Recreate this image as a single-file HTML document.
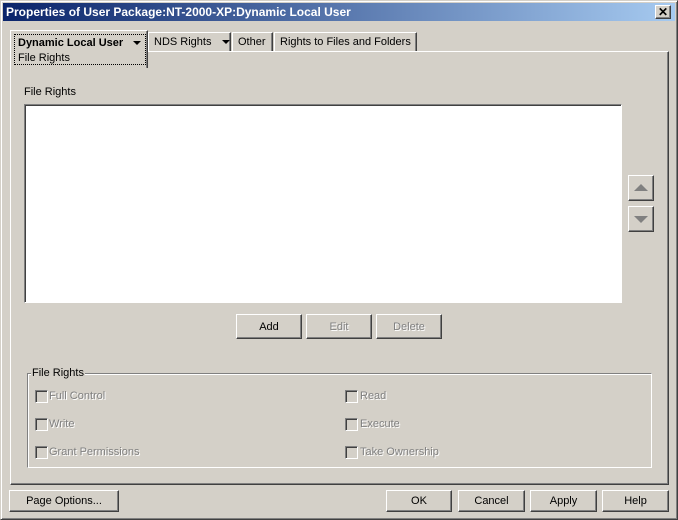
<!DOCTYPE html>
<html><head><style>
*{box-sizing:border-box;margin:0;padding:0}
body{width:678px;height:520px;background:#d4d0c8;font-family:"Liberation Sans",sans-serif;font-size:11px;position:relative;overflow:hidden;color:#000}
.a{position:absolute}
.win{left:0;top:0;width:678px;height:520px;border:1px solid;border-color:#d4d0c8 #404040 #404040 #d4d0c8;box-shadow:inset 1px 1px 0 #fff,inset -1px -1px 0 #808080}
.title{left:3px;top:3px;width:672px;height:18px;background:linear-gradient(90deg,#0a246a,#a6caf0);color:#fff;font-weight:bold;font-size:12px;line-height:18px;padding-left:3px}
.btn{border:1px solid;border-color:#fff #404040 #404040 #fff;box-shadow:inset -1px -1px 0 #808080;text-align:center;line-height:22px;background:#d4d0c8}
.dis{color:#808080;text-shadow:1px 1px 0 #fff}
.tab{border:1px solid;border-bottom:none;border-color:#fff #404040 #404040 #fff;box-shadow:inset -1px 0 0 #808080;line-height:16px;padding-left:5px;background:#d4d0c8}
.cb{width:13px;height:13px;border:1px solid;border-color:#808080 #fff #fff #808080;box-shadow:inset 1px 1px 0 #404040}
.dn{display:inline-block;width:0;height:0;border-left:4px solid transparent;border-right:4px solid transparent;border-top:4px solid #000;vertical-align:middle}
</style></head><body>
<div class="a win"></div>
<div class="a title">Properties of User Package:NT-2000-XP:Dynamic Local User</div>
<div class="a btn" style="left:655px;top:5px;width:16px;height:14px;line-height:12px;font-weight:bold;font-size:12px">✕</div>
<div class="a" style="left:10px;top:51px;width:659px;height:434px;border:1px solid;border-color:#fff #404040 #404040 #fff;box-shadow:inset -1px -1px 0 #808080"></div>
<div class="a tab" style="left:148px;top:32px;width:83px;height:19px;padding-top:1px">NDS Rights <span class="dn" style="margin-left:7px"></span></div>
<div class="a tab" style="left:232px;top:32px;width:41px;height:19px;padding-top:1px">Other</div>
<div class="a tab" style="left:274px;top:32px;width:143px;height:19px;padding-top:1px">Rights to Files and Folders</div>
<div class="a tab" style="left:10px;top:30px;width:138px;height:38px;background:#d4d0c8"></div>
<div class="a" style="left:14px;top:34px;width:132px;height:31px;border:1px dotted #000;padding-left:3px;padding-top:1px;line-height:15px"><b>Dynamic Local User</b> <span class="dn" style="margin-left:7px"></span><br>File Rights</div>
<div class="a" style="left:24px;top:86px">File Rights</div>
<div class="a" style="left:24px;top:104px;width:598px;height:199px;background:#fff;border:1px solid;border-color:#808080 #fff #fff #808080;box-shadow:inset 1px 1px 0 #404040"></div>
<div class="a btn" style="left:628px;top:175px;width:26px;height:26px"><div class="a" style="left:5px;top:8px;width:0;height:0;border-left:7px solid transparent;border-right:7px solid transparent;border-bottom:7px solid #808080"></div></div>
<div class="a btn" style="left:628px;top:206px;width:26px;height:26px"><div class="a" style="left:5px;top:9px;width:0;height:0;border-left:7px solid transparent;border-right:7px solid transparent;border-top:7px solid #808080"></div></div>
<div class="a btn" style="left:236px;top:314px;width:66px;height:25px;line-height:24px">Add</div>
<div class="a btn dis" style="left:306px;top:314px;width:66px;height:25px;line-height:24px">Edit</div>
<div class="a btn dis" style="left:376px;top:314px;width:66px;height:25px;line-height:24px">Delete</div>
<div class="a" style="left:27px;top:373px;width:625px;height:95px;border:1px solid;border-color:#808080 #fff #fff #808080;box-shadow:inset 1px 1px 0 #fff,1px 1px 0 #808080 inset"></div>
<div class="a" style="left:31px;top:367px;background:#d4d0c8;padding:0 1px">File Rights</div>
<div class="a cb" style="left:35px;top:390px"></div><div class="a dis" style="left:49px;top:390px">Full Control</div>
<div class="a cb" style="left:35px;top:418px"></div><div class="a dis" style="left:49px;top:418px">Write</div>
<div class="a cb" style="left:35px;top:446px"></div><div class="a dis" style="left:49px;top:446px">Grant Permissions</div>
<div class="a cb" style="left:345px;top:390px"></div><div class="a dis" style="left:360px;top:390px">Read</div>
<div class="a cb" style="left:345px;top:418px"></div><div class="a dis" style="left:360px;top:418px">Execute</div>
<div class="a cb" style="left:345px;top:446px"></div><div class="a dis" style="left:360px;top:446px">Take Ownership</div>
<div class="a btn" style="left:9px;top:490px;width:110px;height:22px;line-height:20px">Page Options...</div>
<div class="a btn" style="left:386px;top:490px;width:66px;height:22px;line-height:20px">OK</div>
<div class="a btn" style="left:458px;top:490px;width:67px;height:22px;line-height:20px">Cancel</div>
<div class="a btn" style="left:530px;top:490px;width:67px;height:22px;line-height:20px">Apply</div>
<div class="a btn" style="left:602px;top:490px;width:67px;height:22px;line-height:20px">Help</div>
</body></html>
